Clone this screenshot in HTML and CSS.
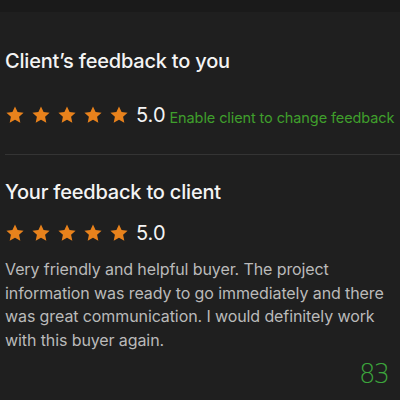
FILE: index.html
```
<!DOCTYPE html>
<html lang="en">
<head>
    <meta charset="UTF-8">
    <meta name="viewport" content="width=device-width, initial-scale=1.0">
    <title>Feedback</title>
    <link rel="stylesheet" href="styles.css">
</head>
<body>
    <div class="topbar"></div>
    <div class="container">
        <section class="feedback">
            <h2>Client’s feedback to you</h2>
            <div class="rating">
                <div class="stars">
                    <svg viewBox="0 0 24 24"><path d="M12 1.8l3.1 6.6 7.2.8-5.4 4.9 1.5 7.1L12 17.6l-6.4 3.6 1.5-7.1-5.4-4.9 7.2-.8z"/></svg>
                    <svg viewBox="0 0 24 24"><path d="M12 1.8l3.1 6.6 7.2.8-5.4 4.9 1.5 7.1L12 17.6l-6.4 3.6 1.5-7.1-5.4-4.9 7.2-.8z"/></svg>
                    <svg viewBox="0 0 24 24"><path d="M12 1.8l3.1 6.6 7.2.8-5.4 4.9 1.5 7.1L12 17.6l-6.4 3.6 1.5-7.1-5.4-4.9 7.2-.8z"/></svg>
                    <svg viewBox="0 0 24 24"><path d="M12 1.8l3.1 6.6 7.2.8-5.4 4.9 1.5 7.1L12 17.6l-6.4 3.6 1.5-7.1-5.4-4.9 7.2-.8z"/></svg>
                    <svg viewBox="0 0 24 24"><path d="M12 1.8l3.1 6.6 7.2.8-5.4 4.9 1.5 7.1L12 17.6l-6.4 3.6 1.5-7.1-5.4-4.9 7.2-.8z"/></svg>
                </div>
                <span class="score">5.0</span>
                <a class="action" href="#">Enable client to change feedback</a>
            </div>
        </section>

        <hr class="divider">

        <section class="feedback">
            <h2>Your feedback to client</h2>
            <div class="rating">
                <div class="stars">
                    <svg viewBox="0 0 24 24"><path d="M12 1.8l3.1 6.6 7.2.8-5.4 4.9 1.5 7.1L12 17.6l-6.4 3.6 1.5-7.1-5.4-4.9 7.2-.8z"/></svg>
                    <svg viewBox="0 0 24 24"><path d="M12 1.8l3.1 6.6 7.2.8-5.4 4.9 1.5 7.1L12 17.6l-6.4 3.6 1.5-7.1-5.4-4.9 7.2-.8z"/></svg>
                    <svg viewBox="0 0 24 24"><path d="M12 1.8l3.1 6.6 7.2.8-5.4 4.9 1.5 7.1L12 17.6l-6.4 3.6 1.5-7.1-5.4-4.9 7.2-.8z"/></svg>
                    <svg viewBox="0 0 24 24"><path d="M12 1.8l3.1 6.6 7.2.8-5.4 4.9 1.5 7.1L12 17.6l-6.4 3.6 1.5-7.1-5.4-4.9 7.2-.8z"/></svg>
                    <svg viewBox="0 0 24 24"><path d="M12 1.8l3.1 6.6 7.2.8-5.4 4.9 1.5 7.1L12 17.6l-6.4 3.6 1.5-7.1-5.4-4.9 7.2-.8z"/></svg>
                </div>
                <span class="score">5.0</span>
            </div>
            <p class="comment">Very friendly and helpful buyer. The project information was ready to go immediately and there was great communication. I would definitely work with this buyer again.</p>
        </section>

        <div class="page-number">83</div>
    </div>
</body>
</html>
```

FILE: styles.css
```
body {
    margin: 0;
    background-color: #1f1f1f;
    font-family: Inter, "Liberation Sans", sans-serif;
    color: #f4f4f4;
}
.topbar {
    height: 12px;
    background-color: #1a1a1a;
}
.container {
    padding: 0 0 0 5px;
}
.feedback h2 {
    font-size: 20px;
    font-weight: 500;
    margin: 0;
    letter-spacing: -0.2px;
}
.feedback:first-child h2 {
    padding-top: 37px;
}
.rating {
    display: flex;
    align-items: center;
}
.feedback:first-child .rating {
    margin-top: 30px;
}
.feedback:last-of-type .rating {
    margin-top: 17px;
}
.stars {
    display: flex;
    gap: 6px;
}
.stars svg {
    width: 20px;
    height: 20px;
    fill: #e8821c;
}
.score {
    font-size: 20px;
    margin-left: 7px;
}
.action {
    color: #3f9f2c;
    font-size: 14.5px;
    text-decoration: none;
    margin-left: 4px;
    margin-top: 4px;
    letter-spacing: -0.1px;
}
.divider {
    border: none;
    border-top: 1px solid #343434;
    margin: 27px 0 25px 0;
}
.comment {
    margin: 13px 0 0 0;
    font-size: 16px;
    line-height: 23.7px;
    color: #bababa;
    padding-right: 4px;
    letter-spacing: -0.1px;
}
.page-number {
    text-align: right;
    font-family: "DejaVu Sans", sans-serif;
    font-weight: 300;
    font-size: 26px;
    color: #3ca43c;
    padding-right: 12px;
    margin-top: 6px;
    letter-spacing: -2px;
}
```
